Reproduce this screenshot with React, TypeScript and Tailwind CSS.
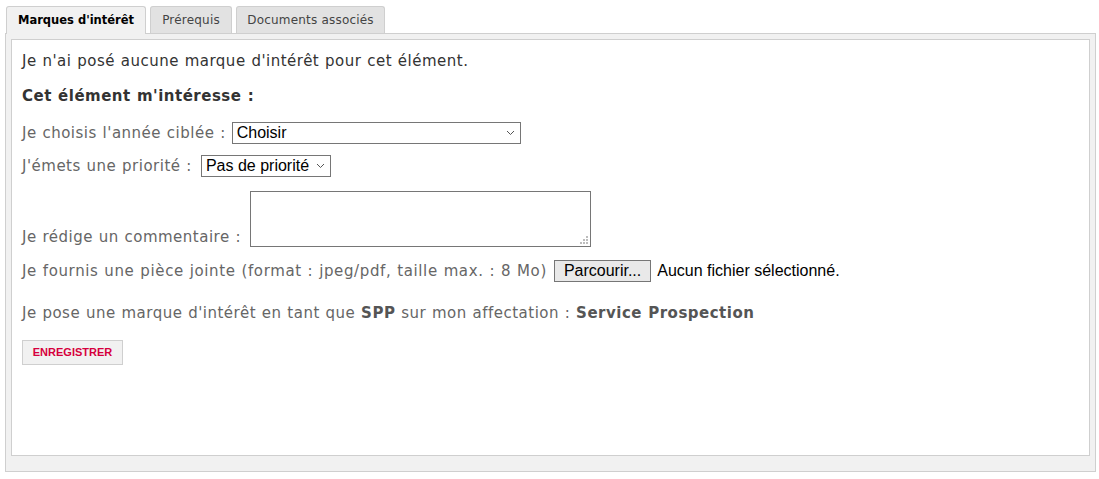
import React from "react";

const verdana = { fontFamily: '"DejaVu Sans", Verdana, sans-serif' };
const arial = { fontFamily: '"Liberation Sans", Arial, sans-serif' };

function Chevron() {
  return (
    <svg width="9" height="6" viewBox="0 0 9 6" className="shrink-0">
      <path d="M1 1l3.5 3.5L8 1" fill="none" stroke="#555" strokeWidth="1" />
    </svg>
  );
}

function FakeSelect({ value, width }: { value: string; width: string }) {
  return (
    <div
      className={`${width} h-[22px] border border-[#767676] bg-white flex items-center justify-between pl-[4px] pr-[5px] text-[16px] text-black tracking-normal [word-spacing:0]`}
      style={arial}
    >
      <span>{value}</span>
      <Chevron />
    </div>
  );
}

function Grip() {
  const dots = [
    [6, 0],
    [3, 3],
    [6, 3],
    [0, 6],
    [3, 6],
    [6, 6],
  ];
  return (
    <svg width="8" height="8" className="absolute right-[3px] bottom-[3px]">
      {dots.map(([x, y]) => (
        <rect key={`${x}-${y}`} x={x} y={y} width="2" height="2" fill="#bdbdbd" />
      ))}
    </svg>
  );
}

export default function App() {
  return (
    <div className="w-full h-[479px] bg-white pt-[6px] pl-[5px] pr-[3px]" style={verdana}>
      <div className="flex items-end gap-[4px] pl-[1px]">
        <div className="h-[28px] w-[140px] -mb-px relative z-10 border border-b-0 border-[#cfcfcf] rounded-t-[3px] bg-[#f1f1f1] flex items-center justify-center text-[11.5px] font-bold text-black">
          Marques d'intérêt
        </div>
        <div className="h-[27px] w-[82px] border border-b-0 border-[#cfcfcf] rounded-t-[3px] bg-[#e2e2e2] flex items-center justify-center text-[12px] tracking-[0.2px] text-[#444]">
          Prérequis
        </div>
        <div className="h-[27px] w-[149px] border border-b-0 border-[#cfcfcf] rounded-t-[3px] bg-[#e2e2e2] flex items-center justify-center text-[12px] tracking-[0.2px] text-[#444]">
          Documents associés
        </div>
      </div>

      <div className="h-[439px] border border-[#cfcfcf] bg-[#f1f1f1] px-[5px] pt-[5px] pb-[15px]">
        <div className="h-full border border-[#cfcfcf] bg-white px-[10px] pt-[11px] text-[15px] text-[#666] tracking-[0.5px] [word-spacing:0.5px]">
          <p className="text-[#333] leading-[20px]">Je n'ai posé aucune marque d'intérêt pour cet élément.</p>
          <p className="mt-[15px] font-bold text-[#333] leading-[20px]">Cet élément m'intéresse :</p>

          <div className="mt-[16px] flex items-center gap-[6px]">
            <span>Je choisis l'année ciblée :</span>
            <FakeSelect value="Choisir" width="w-[289px]" />
          </div>
          <div className="mt-[10px] flex items-center gap-[9px]">
            <span>J'émets une priorité :</span>
            <FakeSelect value="Pas de priorité" width="w-[130px]" />
          </div>

          <div className="mt-[14px] flex items-end gap-[9px]">
            <span className="leading-[20px]">Je rédige un commentaire :</span>
            <div className="relative w-[341px] h-[56px]">
              <textarea className="w-full h-full border border-[#767676] bg-white resize-none block" readOnly />
              <Grip />
            </div>
          </div>

          <div className="mt-[12px] flex items-center">
            <span className="tracking-[0.62px]">Je fournis une pièce jointe (format : jpeg/pdf, taille max. : 8 Mo)</span>
            <div className="ml-[7px] flex items-center text-[16px] text-black tracking-normal [word-spacing:0]" style={arial}>
              <button className="h-[22px] px-[9px] border border-[#767676] bg-[#e9e9e9] leading-none">
                Parcourir...
              </button>
              <span className="ml-[6px]">Aucun fichier sélectionné.</span>
            </div>
          </div>

          <p className="mt-[20px] leading-[20px]">
            Je pose une marque d'intérêt en tant que <b className="text-[#555]">SPP</b> sur mon affectation :{" "}
            <b className="text-[#555]">Service Prospection</b>
          </p>

          <button
            className="mt-[17px] w-[101px] h-[25px] border border-[#cfcfcf] bg-[#f1f1f1] text-[11px] text-[#d6003d] font-bold tracking-normal"
            style={arial}
          >
            ENREGISTRER
          </button>
        </div>
      </div>
    </div>
  );
}
